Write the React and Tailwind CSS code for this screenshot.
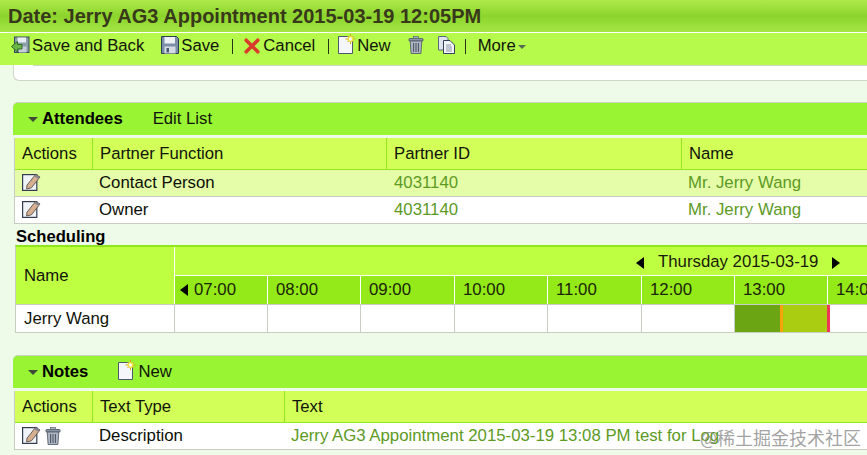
const FONT = "font-['Liberation_Sans',Arial,sans-serif]";

function SaveBackIcon() {
  return (
    <svg width="19" height="19" viewBox="0 0 19 19">
      <rect x="3.5" y="1" width="14.5" height="15.5" fill="#8aa0a8" stroke="#3a4a55" />
      <rect x="6.5" y="1.5" width="8.5" height="5" fill="#e8edf2" />
      <rect x="8" y="10.5" width="7.5" height="6" fill="#c6d0da" />
      <path d="M0.5 10.5 L6.5 5.5 V8.5 H11 V13 H6.5 V16 Z" fill="#6cb648" stroke="#2f6b22" />
    </svg>
  );
}

function SaveIcon() {
  return (
    <svg width="18" height="18" viewBox="0 0 18 18">
      <path d="M0.5 0.5 H15.5 L17.5 2.5 V17.5 H0.5 Z" fill="#7a8ea8" stroke="#2f3b52" />
      <rect x="3.5" y="1" width="10.5" height="6.5" fill="#eef1f5" />
      <rect x="3.5" y="10.5" width="11" height="7" fill="#d5dbe3" />
      <rect x="5.5" y="12" width="2.5" height="4.5" fill="#4a5a72" />
    </svg>
  );
}

function CancelIcon() {
  return (
    <svg width="16" height="16" viewBox="0 0 16 16">
      <path d="M2.2 2.2 L13.8 13.8 M13.8 2.2 L2.2 13.8" stroke="#d93a2b" strokeWidth="3.6" strokeLinecap="round" />
    </svg>
  );
}

function NewIcon() {
  return (
    <svg width="18" height="20" viewBox="0 0 18 20">
      <path d="M0.5 2.5 H11 L14.5 6 V19.5 H0.5 Z" fill="#f4f6fa" stroke="#4e586c" />
      <path d="M12.5 0 V10 M7.5 5 H17.5 M9.5 2 L15.5 8 M15.5 2 L9.5 8" stroke="#c9a820" strokeWidth="1" />
      <circle cx="12.5" cy="5" r="3" fill="#f2dc3e" />
      <circle cx="12.5" cy="5" r="1.7" fill="#fffef0" />
    </svg>
  );
}

function TrashIcon() {
  return (
    <svg width="16" height="18" viewBox="0 0 16 18">
      <rect x="0.8" y="2.5" width="14.4" height="2.6" rx="1.2" fill="#8b95a3" stroke="#4a5361" strokeWidth="0.8" />
      <rect x="5.5" y="0.6" width="5" height="2" fill="#aab2bd" stroke="#4a5361" strokeWidth="0.6" />
      <path d="M2.2 5 H13.8 L12.9 17.5 H3.1 Z" fill="#adb6c2" stroke="#4a5361" strokeWidth="0.8" />
      <path d="M5.6 7 V16 M8 7 V16 M10.4 7 V16" stroke="#4f5866" strokeWidth="1.1" />
    </svg>
  );
}

function CopyIcon() {
  return (
    <svg width="17" height="18" viewBox="0 0 17 18">
      <path d="M0.5 0.5 H8 L10 2.5 V14 H0.5 Z" fill="#dfe4ec" stroke="#5d6980" />
      <path d="M5.5 4.5 H12 L16.5 9 V17.5 H5.5 Z" fill="#f3f5f9" stroke="#36415a" />
      <path d="M8 9 H13 M8 11 H14 M8 13 H14 M8 15 H14" stroke="#8a95a8" />
    </svg>
  );
}

function EditIcon() {
  return (
    <svg width="19" height="18" viewBox="0 0 19 18" className="-mt-[2px]">
      <rect x="0.6" y="1.6" width="14.2" height="15.8" fill="#f0f3f8" stroke="#333c50" strokeWidth="1.2" />
      <path d="M5 12.2 L13.6 1.4 L18 4 L9.4 14.8 L4.6 16 Z" fill="#d6b090" stroke="#5b5048" strokeWidth="0.9" />
      <path d="M13.6 1.4 L18 4 L16.6 5.8 L12.2 3.2 Z" fill="#83858e" />
    </svg>
  );
}

function Sep() {
  return <div className="w-px h-[15px] bg-[#27331a]" />;
}

function Caret() {
  return <div className="w-0 h-0 border-x-[5px] border-x-transparent border-t-[5px] border-t-[#3f4a38]" />;
}

function SectionHead({ title, children }) {
  return (
    <div className="ml-[13px] h-[33px] flex items-center pl-[15px] bg-[#99f433] border-t border-[#c9d3c3] rounded-tl-[5px]">
      <Caret />
      <span className="ml-[4px] font-bold text-black">{title}</span>
      {children}
    </div>
  );
}

function Attendees() {
  const cols = "grid grid-cols-[78px_294px_295px_1fr]";
  const rows = [
    { fn: "Contact Person", bg: "bg-[#e5fda8] h-[27px] border-b border-[#c8cdc4]" },
    { fn: "Owner", bg: "bg-white h-[26px]" },
  ];
  return (
    <div className="mt-[3px] ml-[14px] border-l border-b border-[#c8cdc4]">
      <div className={`${cols} h-[32px] bg-[#d2ff58] border-b border-[#93e81f]`}>
        {["Actions", "Partner Function", "Partner ID", "Name"].map((h, i) => (
          <div key={h} className={`flex items-center pl-[7px] pt-[1px] ${i < 3 ? "border-r border-[#93e81f]" : ""}`}>
            {h}
          </div>
        ))}
      </div>
      {rows.map((r) => (
        <div key={r.fn} className={`${cols} ${r.bg} text-[16.8px]`}>
          <div className="flex items-center pl-[7px]"><EditIcon /></div>
          <div className="flex items-center pl-[6px] text-[#0b0f08]">{r.fn}</div>
          <div className="flex items-center pl-[7px] text-[#5c9a24]">4031140</div>
          <div className="flex items-center pl-[6px] text-[#5c9a24]">Mr. Jerry Wang</div>
        </div>
      ))}
    </div>
  );
}

function Scheduling() {
  const hours = ["07:00", "08:00", "09:00", "10:00", "11:00", "12:00", "13:00", "14:00"];
  const cols = "grid grid-cols-[93px_93px_94px_93px_94px_93px_93px_1fr]";
  return (
    <div className="ml-[15px] border-t-2 border-[#8ee81a] border-l border-b border-l-[#c8cdc4] border-b-[#c8cdc4]">
      <div className="flex">
        <div className="w-[159px] h-[57px] shrink-0 flex items-center pl-[8px] pt-[2px] bg-[#bfff42] border-r border-white">Name</div>
        <div className="flex-1 min-w-0">
          <div className="h-[29px] bg-[#bfff42] border-b border-white flex items-center pl-[461px] pt-[3px] gap-[14px]">
            <div className="w-0 h-0 border-y-[6px] border-y-transparent border-r-[8px] border-r-black" />
            <span className="whitespace-nowrap text-[#1a1a0a] text-[16.8px]">Thursday 2015-03-19</span>
            <div className="w-0 h-0 border-y-[6px] border-y-transparent border-l-[8px] border-l-black" />
          </div>
          <div className={`${cols} h-[28px] bg-[#93ea18]`}>
            {hours.map((h, i) => (
              <div key={h} className={`flex items-center overflow-hidden whitespace-nowrap text-[#1a2408] text-[16.8px] ${i === 0 ? "pl-[5px] gap-[6px]" : "pl-[8px]"} ${i < 7 ? "border-r border-white" : ""}`}>
                {i === 0 && <div className="w-0 h-0 border-y-[6px] border-y-transparent border-r-[8px] border-r-black" />}
                {h}
              </div>
            ))}
          </div>
        </div>
      </div>
      <div className="flex h-[28px] bg-white border-t border-[#c8cdc4]">
        <div className="w-[159px] shrink-0 flex items-center pl-[8px] pt-[1px] text-[16.8px] border-r border-[#c8cdc4]">Jerry Wang</div>
        <div className={`flex-1 min-w-0 ${cols}`}>
          {hours.map((h, i) => (
            <div key={h} className={`flex ${i === 6 ? "border-r border-[#f0355a]" : i < 7 ? "border-r border-[#c8cdc4]" : ""}`}>
              {i === 6 && (
                <>
                  <div className="w-[45px] bg-[#6ba514]" />
                  <div className="w-[3px] bg-[#f5a30a]" />
                  <div className="flex-1 bg-[#aacd12]" />
                </>
              )}
              {i === 7 && <div className="w-[2px] bg-[#f0355a]" />}
            </div>
          ))}
        </div>
      </div>
    </div>
  );
}

function Notes() {
  const cols = "grid grid-cols-[78px_192px_1fr]";
  return (
    <div className="mt-[3px] ml-[14px] border-l border-b border-[#c8cdc4]">
      <div className={`${cols} h-[32px] bg-[#d2ff58] border-b border-[#93e81f]`}>
        {["Actions", "Text Type", "Text"].map((h, i) => (
          <div key={h} className={`flex items-center pl-[7px] pt-[1px] ${i < 2 ? "border-r border-[#93e81f]" : ""}`}>
            {h}
          </div>
        ))}
      </div>
      <div className={`${cols} h-[26px] bg-white text-[16.8px]`}>
        <div className="flex items-center pl-[7px] gap-[4px]"><EditIcon /><TrashIcon /></div>
        <div className="flex items-center pl-[6px] text-[#0b0f08]">Description</div>
        <div className="flex items-center pl-[6px] whitespace-nowrap text-[#5c9a24]">Jerry AG3 Appointment 2015-03-19 13:08 PM test for Log</div>
      </div>
    </div>
  );
}

export default function App() {
  return (
    <div className={`relative w-[867px] h-[455px] overflow-hidden bg-[#eefbe8] text-[16.7px] leading-none text-[#10140c] ${FONT}`}>
      <div className="h-[32px] flex items-center pl-[8px] font-bold text-[20px] text-[#38381a] bg-gradient-to-b from-[#aeea4a] via-[#8cd42c] to-[#a4e644]">
        Date: Jerry AG3 Appointment 2015-03-19 12:05PM
      </div>
      <div className="h-[33px] flex items-center pl-[11px] pb-[6px] bg-[#b6fa4b] border-t border-white text-[#10140c]">
        <span className="-mt-[2px]"><SaveBackIcon /></span>
        <span className="ml-[2px]">Save and Back</span>
        <span className="ml-[17px] -mt-[2px]"><SaveIcon /></span>
        <span className="ml-[2px]">Save</span>
        <span className="ml-[13px]"><Sep /></span>
        <span className="ml-[11px]"><CancelIcon /></span>
        <span className="ml-[3px]">Cancel</span>
        <span className="ml-[13px]"><Sep /></span>
        <span className="ml-[9px] -mt-[4px]"><NewIcon /></span>
        <span className="ml-[1px]">New</span>
        <span className="ml-[17px] -mt-[2px]"><TrashIcon /></span>
        <span className="ml-[14px] -mt-[2px]"><CopyIcon /></span>
        <span className="ml-[10px]"><Sep /></span>
        <span className="ml-[12px]">More</span>
        <div className="ml-[2px] mt-[2px] w-0 h-0 border-x-[4px] border-x-transparent border-t-[4px] border-t-[#5a6a50]" />
      </div>

      <div className="ml-[13px] h-[16px] bg-white border-l border-b border-[#cfd6ca] rounded-bl-[6px] pl-[19px]">
        <div className="h-px bg-[#cfd6ca]" />
      </div>

      <div className="mt-[21px]">
        <SectionHead title="Attendees">
          <span className="ml-[30px] text-[#10140c]">Edit List</span>
        </SectionHead>
        <Attendees />
      </div>

      <div className="ml-[16px] mt-[4px] pt-[1px] h-[17px] flex items-center font-bold text-[16.6px] text-black">Scheduling</div>
      <Scheduling />

      <div className="mt-[22px]">
        <SectionHead title="Notes">
          <span className="ml-[30px] -mt-[4px]"><NewIcon /></span>
          <span className="ml-[2px] text-[#10140c]">New</span>
        </SectionHead>
        <Notes />
      </div>

      <div className="absolute right-[6px] bottom-[9px] text-[18px] text-[#8a8a8a]/80 font-['Noto_Sans_CJK_SC',sans-serif]">@稀土掘金技术社区</div>
    </div>
  );
}
